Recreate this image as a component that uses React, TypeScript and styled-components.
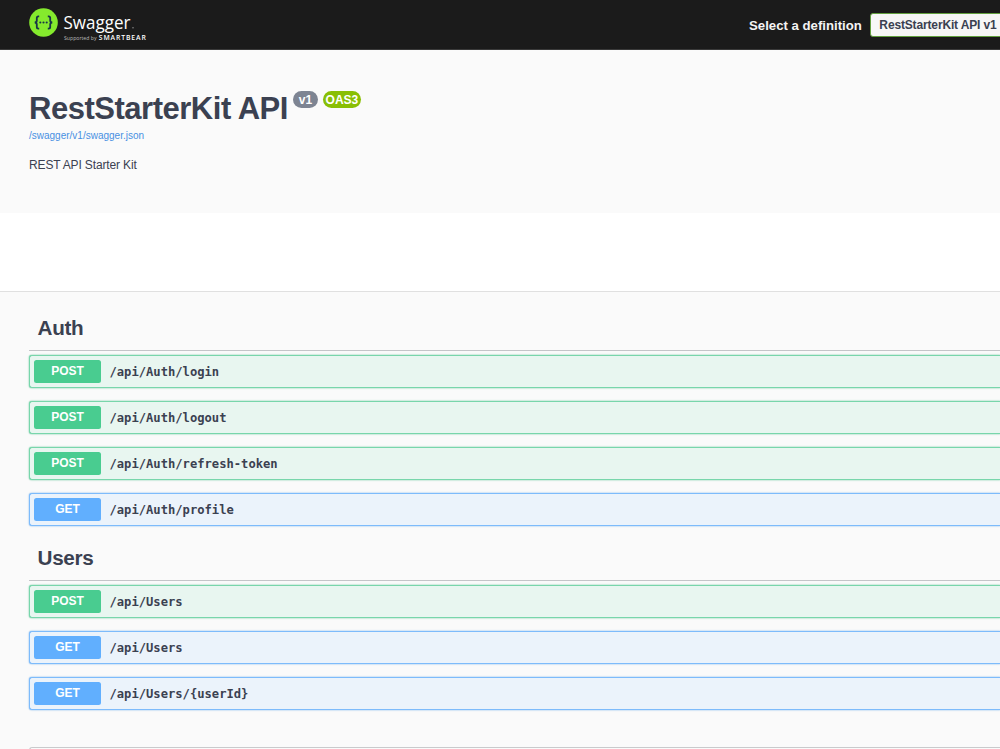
import React from "react";
import styled, { createGlobalStyle } from "styled-components";

const sans = `"Liberation Sans", Arial, sans-serif`;

const GlobalStyle = createGlobalStyle`
  * { box-sizing: border-box; }
  html, body { margin: 0; overflow: hidden; }
  body { background: #fafafa; color: #3b4151; font-family: ${sans}; }
`;

type Method = "POST" | "GET";
const tones: Record<Method, { main: string; fill: string; border: string }> = {
  POST: { main: "#49cc90", fill: "#e8f6f0", border: "#78d6ab" },
  GET: { main: "#61affe", fill: "#ebf3fb", border: "#7dbbfb" },
};

const Page = styled.div`
  width: 100%;
  height: 749px;
  overflow: hidden;
`;

const Topbar = styled.header`
  display: flex;
  align-items: center;
  justify-content: space-between;
  height: 50px;
  padding-left: 29px;
  background: #1b1b1b;
  border-bottom: 1px solid #3a3a3a;
`;

const Logo = styled.svg`
  display: block;
  flex: none;
`;

const Definition = styled.label`
  display: flex;
  align-items: center;
  flex: none;
  gap: 8px;
  width: 251px;
  color: #f4f4f4;
  font-size: 13.2px;
  font-weight: 700;
  white-space: nowrap;
`;

const DefinitionName = styled.span`
  padding-top: 2px;
`;

const DefinitionValue = styled.span`
  flex: none;
  width: 160px;
  height: 24px;
  padding-left: 8.5px;
  border: 1px solid #62a03f;
  border-radius: 3px;
  background: #f7f7f7;
  color: #3b4151;
  font-size: 12px;
  letter-spacing: -0.15px;
  line-height: 22px;
`;

const Info = styled.section`
  height: 163px;
  padding: 40px 29px 0;
`;

const TitleRow = styled.div`
  display: flex;
  align-items: flex-start;
  gap: 5px;
`;

const Title = styled.h1`
  margin: 0;
  font-size: 31px;
  letter-spacing: -0.48px;
  line-height: 37px;
`;

const Pill = styled.span<{ $color: string; $width: number }>`
  width: ${(p) => p.$width}px;
  height: 17px;
  margin-top: 1px;
  border-radius: 9px;
  background: ${(p) => p.$color};
  color: #fff;
  font-size: 12px;
  font-weight: 700;
  line-height: 18px;
  text-align: center;
`;

const SpecLink = styled.a`
  display: block;
  margin-top: 3px;
  color: #4990e2;
  font-size: 10px;
  line-height: 12px;
`;

const Description = styled.p`
  margin: 16px 0 0;
  font-size: 12px;
  letter-spacing: -0.14px;
  line-height: 14px;
`;

const SchemeBand = styled.div`
  height: 79px;
  background: #fff;
  border-bottom: 1px solid #e0e0e0;
`;

const Operations = styled.main`
  padding-left: 29px;
`;

const TagHeading = styled.h2<{ $first?: boolean }>`
  height: ${(p) => (p.$first ? 59 : 42)}px;
  margin: 0 0 4px;
  padding: ${(p) => (p.$first ? 24 : 7)}px 0 0 8.5px;
  border-bottom: 1px solid #c4c5c8;
  font-size: 20.7px;
  letter-spacing: -0.3px;
  line-height: 24px;
`;

const Operation = styled.div<{ $method: Method }>`
  display: flex;
  align-items: center;
  height: 33px;
  margin-bottom: 13px;
  padding-left: 4px;
  border: 1px solid ${(p) => tones[p.$method].border};
  border-right: 0;
  border-radius: 3px 0 0 3px;
  background: ${(p) => tones[p.$method].fill};
  box-shadow: 0 0 1.5px ${(p) => tones[p.$method].main}, 0 0 2px rgba(0, 0, 0, 0.1);
`;

const MethodBadge = styled.span<{ $method: Method }>`
  width: 67px;
  height: 23px;
  border-radius: 2.5px;
  background: ${(p) => tones[p.$method].main};
  color: #fff;
  font-size: 12px;
  font-weight: 700;
  line-height: 23px;
  text-align: center;
`;

const Path = styled.span`
  margin-left: 8.5px;
  font-family: "DejaVu Sans Mono", monospace;
  font-size: 12.15px;
  font-weight: 700;
  line-height: 16px;
`;

const Models = styled.section`
  height: 40px;
  margin-top: 37px;
  border: 1px solid #c9cacc;
  border-right: 0;
  border-radius: 3px 0 0 0;
`;

const groups: { name: string; operations: [Method, string][] }[] = [
  {
    name: "Auth",
    operations: [
      ["POST", "/api/Auth/login"],
      ["POST", "/api/Auth/logout"],
      ["POST", "/api/Auth/refresh-token"],
      ["GET", "/api/Auth/profile"],
    ],
  },
  {
    name: "Users",
    operations: [
      ["POST", "/api/Users"],
      ["GET", "/api/Users"],
      ["GET", "/api/Users/{userId}"],
    ],
  },
];

function SwaggerLogo() {
  return (
    <Logo width="120" height="49" viewBox="0 0 120 49" role="img" aria-label="Swagger">
      <circle cx="14.5" cy="22.5" r="14.3" fill="#85ea2d" />
      <g fill="none" stroke="#173647" strokeWidth="1.8">
        <path d="M10.2 16.4H9.4Q7.8 16.4 7.8 18V20.5Q7.8 22.5 5.7 22.5Q7.8 22.5 7.8 24.5V27Q7.8 28.6 9.4 28.6H10.2" />
        <path d="M18.8 16.4H19.6Q21.2 16.4 21.2 18V20.5Q21.2 22.5 23.3 22.5Q21.2 22.5 21.2 24.5V27Q21.2 28.6 19.6 28.6H18.8" />
      </g>
      <g fill="#173647">
        <circle cx="11.3" cy="22.5" r="1.05" />
        <circle cx="14.5" cy="22.5" r="1.05" />
        <circle cx="17.7" cy="22.5" r="1.05" />
      </g>
      <text x="34.5" y="28.6" fill="#fff" fontFamily="'Open Sans', sans-serif" fontSize="19" textLength="67" lengthAdjust="spacingAndGlyphs">
        Swagger
      </text>
      <rect x="103" y="27.3" width="2" height="1" fill="#777" />
      <text x="35" y="40" fill="#bbb" fontFamily="'Open Sans', sans-serif" fontSize="5.6" textLength="32.5" lengthAdjust="spacingAndGlyphs">
        Supported by
      </text>
      <text x="69.8" y="40" fill="#fff" fontFamily="'Open Sans', sans-serif" fontWeight="600" fontSize="6.8" textLength="47">
        SMARTBEAR
      </text>
    </Logo>
  );
}

export default function App() {
  return (
    <Page>
      <GlobalStyle />
      <Topbar>
        <SwaggerLogo />
        <Definition>
          <DefinitionName>Select a definition</DefinitionName>
          <DefinitionValue>RestStarterKit API v1</DefinitionValue>
        </Definition>
      </Topbar>
      <Info>
        <TitleRow>
          <Title>RestStarterKit API</Title>
          <Pill $color="#7d8492" $width={25}>v1</Pill>
          <Pill $color="#89bf04" $width={38}>OAS3</Pill>
        </TitleRow>
        <SpecLink>/swagger/v1/swagger.json</SpecLink>
        <Description>REST API Starter Kit</Description>
      </Info>
      <SchemeBand />
      <Operations>
        {groups.map((group, i) => (
          <section key={group.name}>
            <TagHeading $first={i === 0}>{group.name}</TagHeading>
            {group.operations.map(([method, path]) => (
              <Operation key={method + path} $method={method}>
                <MethodBadge $method={method}>{method}</MethodBadge>
                <Path>{path}</Path>
              </Operation>
            ))}
          </section>
        ))}
        <Models />
      </Operations>
    </Page>
  );
}
